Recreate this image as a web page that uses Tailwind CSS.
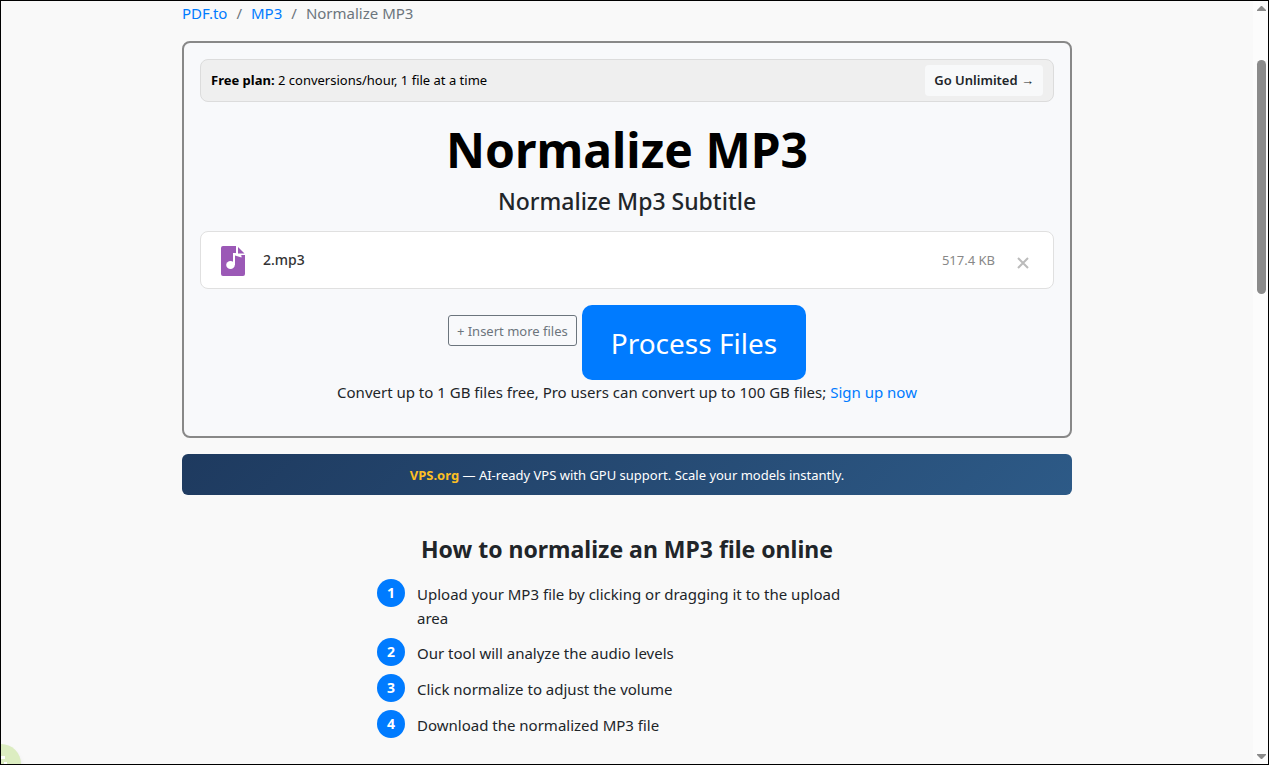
<!DOCTYPE html>
<html lang="en">
<head>
    <meta charset="UTF-8">
    <meta name="viewport" content="width=device-width, initial-scale=1.0">
    <title>Normalize MP3 - PDF.to</title>
    <script src="https://cdn.jsdelivr.net/npm/@tailwindcss/browser@4"></script>
</head>
<body class="h-screen overflow-hidden border border-black bg-[#f9f9f9] flex font-['Segoe_UI','Noto_Sans',sans-serif] text-[15px] leading-6 text-[#212529]">
    <div class="relative flex-1 overflow-hidden">
        <main class="max-w-[890px] mx-auto">
            <nav aria-label="breadcrumb" class="flex gap-[9px] mb-4 text-[#6c757d]">
                <a href="#" class="text-[#007bff]">PDF.to</a>
                <span>/</span>
                <a href="#" class="text-[#007bff]">MP3</a>
                <span>/</span>
                <span>Normalize MP3</span>
            </nav>

            <section class="border-2 border-[#888] rounded-lg bg-[#f8f9fb] px-4 pt-4 pb-8 text-center">
                <div class="flex items-center justify-between border border-[#dcdcdc] rounded-lg bg-[#efefef] px-[10px] py-[5px] text-[13px] leading-[23px] text-black">
                    <p><b>Free plan:</b> 2 conversions/hour, 1 file at a time</p>
                    <a href="#" class="rounded bg-[#f8f9fa] px-[9px] py-1 font-semibold text-[#212529]">Go Unlimited →</a>
                </div>

                <h1 class="mt-[19px] text-[48px] leading-[58px] font-bold text-black">Normalize MP3</h1>
                <h2 class="mt-2 text-[23px] leading-7 font-medium">Normalize Mp3 Subtitle</h2>

                <div class="mt-4 flex items-center h-[58px] border border-[#e0e0e0] rounded-lg bg-white px-5">
                    <svg class="w-6 h-[30px] mt-[2px]" viewBox="0 0 24 30" aria-hidden="true">
                        <path fill="#9b59b6" d="M2 0h13v9h9v19a2 2 0 0 1-2 2H2a2 2 0 0 1-2-2V2a2 2 0 0 1 2-2z"/>
                        <path fill="#9b59b6" d="M17 1l6.500 6.500H17z"/>
                        <path fill="#9b59b6" d="M15 9.500h6v1.500l-3-.5z"/>
                        <ellipse cx="9.500" cy="19" rx="4.300" ry="4" fill="#fff"/>
                        <path fill="#fff" d="M12 7h2.500l6 2.500v2l-6.500-2v9.500h-2z"/>
                    </svg>
                    <span class="ml-[18px] text-[14px] font-medium text-[#333]">2.mp3</span>
                    <span class="ml-auto text-[13px] text-[#888]">517.4 KB</span>
                    <button type="button" aria-label="Remove file" class="ml-[22px] mr-1 mt-[6px] text-[#bbb]">
                        <svg class="size-3" viewBox="0 0 12 12" fill="none" stroke="currentColor" stroke-width="2" aria-hidden="true"><path d="M1 1l10 10M11 1L1 11"/></svg>
                    </button>
                </div>

                <div class="mt-4 flex justify-center items-start gap-[5px]">
                    <button type="button" class="mt-[10px] border border-[#6c757d] rounded-[3px] px-2 h-[31px] text-[13px] text-[#6c757d]">+ Insert more files</button>
                    <button type="button" class="rounded-[10px] bg-[#007bff] px-[29px] h-[75px] text-[28px] text-white">Process Files</button>
                </div>
                <p>Convert up to 1 GB files free, Pro users can convert up to 100 GB files; <a href="#" class="text-[#007bff]">Sign up now</a></p>
            </section>

            <aside class="mt-4 rounded-md bg-linear-135 from-[#1e3a5f] to-[#2d5a87] h-[41px] flex items-center justify-center text-[13px] text-white">
                <p><b class="text-[#fbbf24]">VPS.org</b> — AI-ready VPS with GPU support. Scale your models instantly.</p>
            </aside>

            <section class="mt-10 max-w-[500px] mx-auto">
                <h2 class="text-[23px] leading-[29px] font-bold text-center">How to normalize an MP3 file online</h2>
                <ol class="mt-[15px] flex flex-col gap-2">
                    <li class="flex gap-3">
                        <span class="shrink-0 size-7 rounded-full bg-[#007bff] flex items-center justify-center text-[14px] font-bold text-white">1</span>
                        <span class="pt-[3px] pr-4">Upload your MP3 file by clicking or dragging it to the upload area</span>
                    </li>
                    <li class="flex gap-3">
                        <span class="shrink-0 size-7 rounded-full bg-[#007bff] flex items-center justify-center text-[14px] font-bold text-white">2</span>
                        <span class="pt-[3px] pr-4">Our tool will analyze the audio levels</span>
                    </li>
                    <li class="flex gap-3">
                        <span class="shrink-0 size-7 rounded-full bg-[#007bff] flex items-center justify-center text-[14px] font-bold text-white">3</span>
                        <span class="pt-[3px] pr-4">Click normalize to adjust the volume</span>
                    </li>
                    <li class="flex gap-3">
                        <span class="shrink-0 size-7 rounded-full bg-[#007bff] flex items-center justify-center text-[14px] font-bold text-white">4</span>
                        <span class="pt-[3px] pr-4">Download the normalized MP3 file</span>
                    </li>
                </ol>
            </section>
        </main>

        <button type="button" aria-label="Accessibility options" class="absolute -left-5 -bottom-5 size-10 rounded-full bg-[#dcedc1] shadow-md">
            <svg class="size-10" viewBox="0 0 40 40" fill="#fff" aria-hidden="true"><path d="M12 12h12v3H12zM23 18h3v3h-3z"/></svg>
        </button>
    </div>

    <!-- scrollbar -->
    <div class="w-[15px] bg-[#fcfcfc] flex flex-col items-center pl-[1px] py-[5px]" aria-hidden="true">
        <svg class="w-[9px] h-[5px]" viewBox="0 0 9 5" fill="#8b8b8b"><path d="M4 0h1l4 4v1H0V4z"/></svg>
        <div class="mt-[49px] w-[9px] h-[234px] rounded-full bg-[#8b8b8b]"></div>
        <svg class="mt-auto w-[9px] h-[5px]" viewBox="0 0 9 5" fill="#8b8b8b"><path d="M4 5h1l4-4V0H0v1z"/></svg>
    </div>
</body>
</html>
